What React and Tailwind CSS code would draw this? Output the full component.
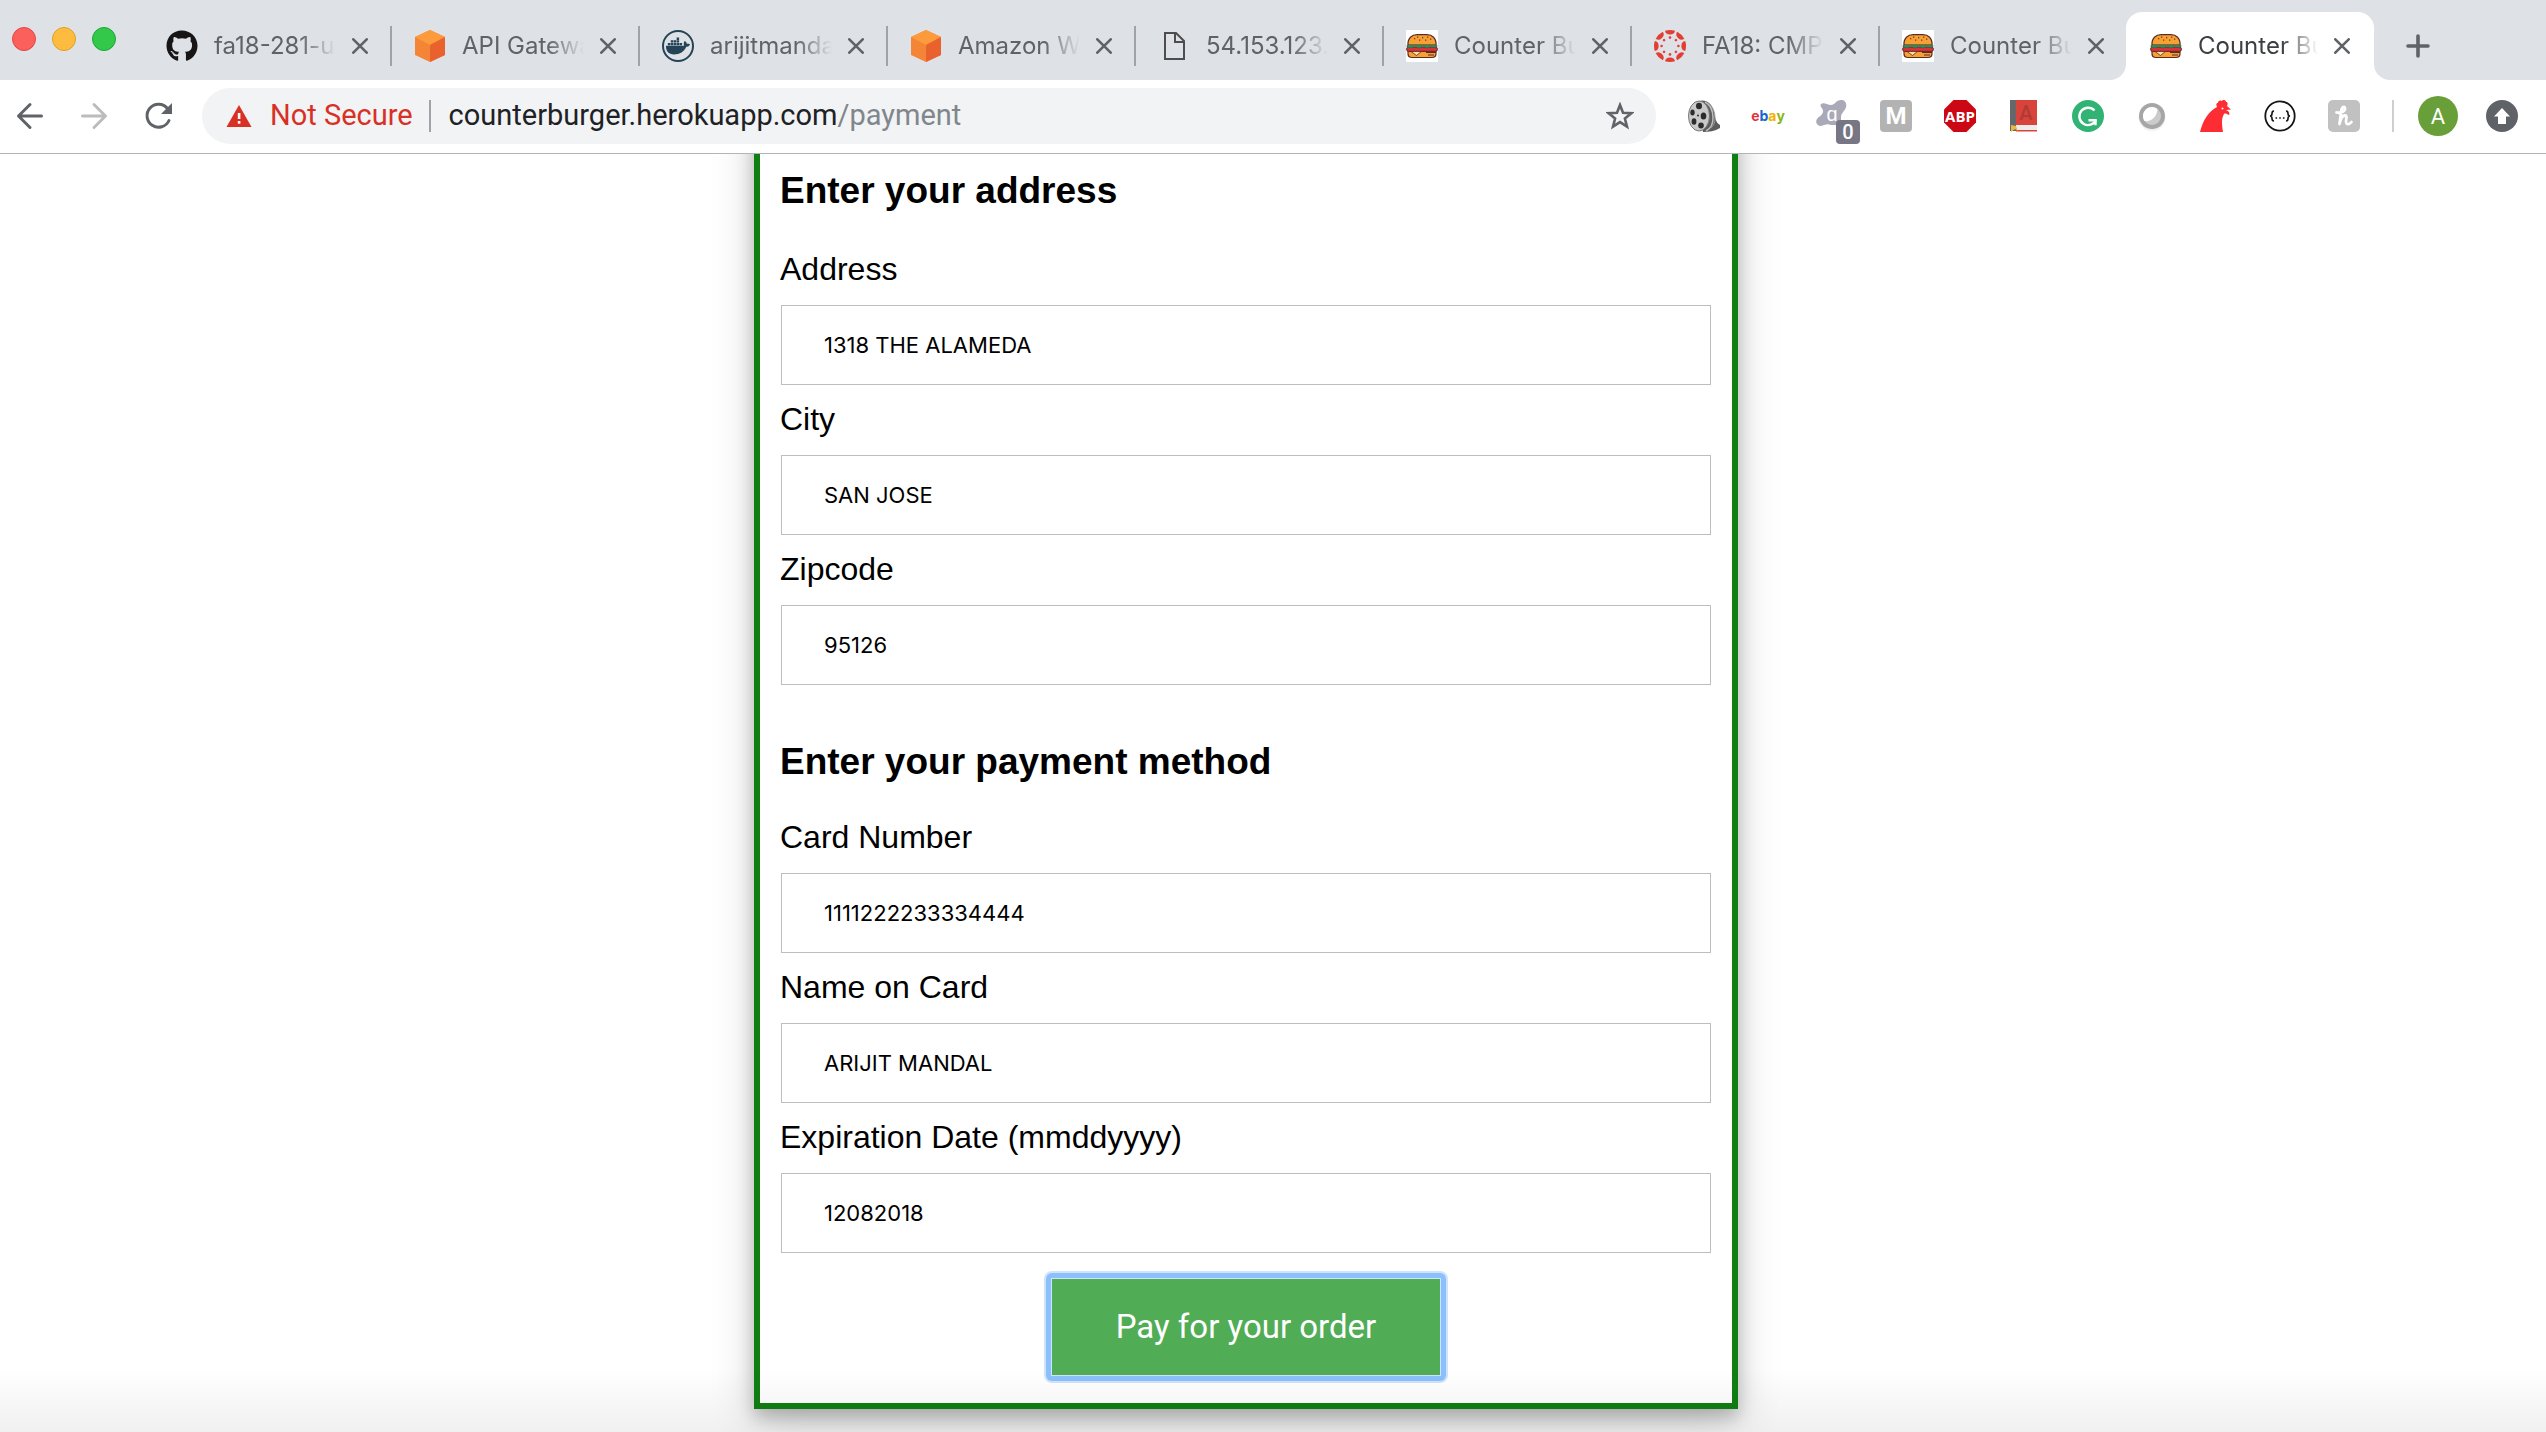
import React from "react";
import { FaGithub, FaDocker } from "react-icons/fa";

function GithubIcon() {
  return <FaGithub className="size-8 text-[#171516]" aria-hidden="true" />;
}

function CubeIcon() {
  return (
    <svg viewBox="0 0 32 32" className="size-8" aria-hidden="true">
      <path d="M16 0 31 7v18l-15 7L1 25V7Z" fill="#f58536" />
      <path d="M16 0 31 7 16 15 1 7Z" fill="#fd9a3c" />
      <path d="M16 15 31 7v18l-15 7Z" fill="#e9622d" />
    </svg>
  );
}

function DockerIcon() {
  return (
    <span className="flex size-8 items-center justify-center rounded-full border-2 border-[#254356]">
      <FaDocker className="size-6 text-[#254356]" aria-hidden="true" />
    </span>
  );
}

function FileIcon() {
  return (
    <svg viewBox="0 0 32 32" className="size-8" fill="none" stroke="#4d4d4d" strokeWidth="2" aria-hidden="true">
      <path d="M7 3h11l8 8v18H7Z" />
      <path d="M17 3v9h9" />
    </svg>
  );
}

function BurgerIcon() {
  return (
    <svg viewBox="0 0 32 32" className="size-8 bg-white" aria-hidden="true">
      <path d="M2 15C1.500 8 6 4.700 11 4.700h10c5 0 9.500 3.300 9 10.300Z" fill="#f7a034" stroke="#5c2b22" strokeWidth="1.200" />
      <path d="M2 21h28v2.500c0 2.500-1.500 4-4 4H6c-2.500 0-4-1.500-4-4Z" fill="#f7a034" stroke="#5c2b22" strokeWidth="1.200" />
      <rect x=".6" y="17" width="30.800" height="4.400" rx="2" fill="#d9303c" stroke="#5c2b22" strokeWidth="1" />
      <path d="M1 15.200h30v1.600l-3 .8-3-1-4 1.300-4-1.300-4 1.300-4-1.300-4 1.300-4-1Z" fill="#1f9b62" stroke="#3a5a3a" strokeWidth=".6" />
      <path d="m5 21.500 5.500 4 5-4Z" fill="#ffe29a" stroke="#5c2b22" strokeWidth=".8" />
      <path d="M20 22.500h10M22 25h6" stroke="#5c2b22" strokeWidth="1" />
      <g fill="#7b3f1c">
        <rect x="8" y="8" width="1.300" height="1.300" />
        <rect x="11" y="6.500" width="1.300" height="1.300" />
        <rect x="13" y="9.500" width="1.300" height="1.300" />
        <rect x="16" y="7" width="1.300" height="1.300" />
        <rect x="19" y="9.500" width="1.300" height="1.300" />
        <rect x="21" y="6.500" width="1.300" height="1.300" />
        <rect x="24" y="8.500" width="1.300" height="1.300" />
      </g>
    </svg>
  );
}

function CanvasIcon() {
  const turns = [0, 45, 90, 135, 180, 225, 270, 315];
  return (
    <svg viewBox="0 0 32 32" className="size-8" fill="#e33e34" aria-hidden="true">
      {turns.map((a) => (
        <g key={a} transform={`rotate(${a} 16 16)`}>
          <path d="M11 .8Q16-.8 21 .8Q20.500 4.600 16 4.600T11 .8Z" />
          <circle cx="16" cy="7.600" r="1.300" />
        </g>
      ))}
    </svg>
  );
}

const tabs = [
  { title: "fa18-281-user", Icon: GithubIcon },
  { title: "API Gateway", Icon: CubeIcon },
  { title: "arijitmandal", Icon: DockerIcon },
  { title: "Amazon Web", Icon: CubeIcon },
  { title: "54.153.123.0", Icon: FileIcon },
  { title: "Counter Burger", Icon: BurgerIcon },
  { title: "FA18: CMPE", Icon: CanvasIcon },
  { title: "Counter Burger", Icon: BurgerIcon },
  { title: "Counter Burger", Icon: BurgerIcon, active: true },
];

function Flare({ className, d }) {
  return (
    <svg viewBox="0 0 16 16" className={"absolute bottom-0 size-4 " + className} fill="#fff" aria-hidden="true">
      <path d={d} />
    </svg>
  );
}

function Tab({ title, Icon, active, first }) {
  return (
    <div
      role="tab"
      aria-selected={!!active}
      className={
        "relative flex h-full min-w-0 max-w-[248px] flex-1 items-center " +
        (active ? "rounded-t-2xl bg-white text-[#3c4043]" : "text-[#5f6368]")
      }
    >
      {active && (
        <>
          <Flare className="-left-4" d="M16 0v16H0A16 16 0 0 0 16 0Z" />
          <Flare className="-right-4" d="M0 0v16h16A16 16 0 0 1 0 0Z" />
        </>
      )}
      <span className={"mr-[22px] h-10 w-0.5 shrink-0 " + (first || active ? "" : "bg-[#9fa3a8]")} />
      <span className="shrink-0">
        <Icon />
      </span>
      <span className="ml-4 flex-1 overflow-hidden text-2xl whitespace-nowrap [mask-image:linear-gradient(to_right,#000_70%,transparent)]">
        {title}
      </span>
      <button type="button" aria-label={`Close ${title}`} className={"ml-4 shrink-0 text-[#5f6368] " + (active ? "mr-6" : "mr-[22px]")}>
        <svg viewBox="0 0 16 16" className="size-4" stroke="currentColor" strokeWidth="2.600" strokeLinecap="round">
          <path d="m1.300 1.300 13.400 13.400M14.700 1.300 1.300 14.700" />
        </svg>
      </button>
    </div>
  );
}

function TabStrip() {
  return (
    <div className="flex h-20 items-stretch bg-[#dee1e6] pt-3">
      <div className="flex w-[142px] shrink-0 gap-4 pt-[15px] pl-3">
        <button type="button" aria-label="Close window" className="size-6 rounded-full border border-[#e2463f] bg-[#fc605c]" />
        <button type="button" aria-label="Minimize window" className="size-6 rounded-full border border-[#dfa023] bg-[#fdbc40]" />
        <button type="button" aria-label="Zoom window" className="size-6 rounded-full border border-[#1ba932] bg-[#34c84a]" />
      </div>
      <div role="tablist" className="flex min-w-0 flex-1">
        {tabs.map((t, i) => (
          <Tab key={i} {...t} first={i === 0} />
        ))}
        <button type="button" aria-label="New tab" className="ml-8 shrink-0 text-[#5f6368]">
          <svg viewBox="0 0 24 24" className="size-6" stroke="currentColor" strokeWidth="3.600" strokeLinecap="round">
            <path d="M12 2v20M2 12h20" />
          </svg>
        </button>
      </div>
    </div>
  );
}

function Reel() {
  return (
    <svg viewBox="0 0 32 32" className="size-8" aria-hidden="true">
      <path d="M11 1C18-1 24 3 26 12c1 6 2 11 6 13v3c-5 3-11 4-17 4Z" fill="#5d5d5d" />
      <path d="M17 2c6 3 8 9 8 16s-3 11-7 13" fill="none" stroke="#bdbdbd" strokeWidth="1.500" />
      <path d="M20 3c5 4 7 9 7 15s-2 8-4 10" fill="none" stroke="#999" />
      <ellipse cx="11" cy="16" rx="10.500" ry="15" fill="#c9c9c9" stroke="#777" />
      <g fill="#2c2c2c">
        <ellipse cx="11" cy="6" rx="3" ry="3.200" />
        <ellipse cx="4.500" cy="12.500" rx="2.200" ry="3" />
        <ellipse cx="15.500" cy="16" rx="2.800" ry="3.500" />
        <ellipse cx="6" cy="21.500" rx="2.400" ry="3.200" />
        <ellipse cx="13" cy="25.500" rx="2.800" ry="3" />
        <circle cx="10" cy="15.500" r="1" />
      </g>
    </svg>
  );
}

function Ebay() {
  return (
    <span className="flex size-8 items-center justify-center text-sm font-bold leading-none">
      <span className="text-[#e53238]">e</span>
      <span className="text-[#1467d3]">b</span>
      <span className="text-[#f5af02]">a</span>
      <span className="text-[#86b817]">y</span>
    </span>
  );
}

function Avast() {
  return (
    <span className="relative block size-8">
      <svg viewBox="0 0 32 32" className="size-8" aria-hidden="true">
        <path
          d="M5 4c3-2 6 1 10 1 4 0 5-5 10-5 4 0 6 3 5 7s-5 6-5 10v8H15c-4-2-7 0-10 1-4 0-6-4-4-7s5-3 6-7-4-5-2-8Z"
          fill="#a9a9b8"
        />
        <text x="16" y="21" textAnchor="middle" fontFamily="Roboto, sans-serif" fontWeight="500" fontSize="20" fill="#fff">
          ɑ
        </text>
      </svg>
      <span className="absolute top-5 left-5 flex size-6 items-center justify-center rounded bg-[#777685] font-[Roboto,sans-serif] text-xl leading-none font-medium text-white">
        0
      </span>
    </span>
  );
}

function Mail() {
  return (
    <span className="flex size-8 items-center justify-center rounded-sm bg-[#b3b3b3] font-[Roboto,sans-serif] text-2xl leading-none font-bold text-white">
      M
    </span>
  );
}

function AdBlock() {
  return (
    <svg viewBox="0 0 32 32" className="size-8" aria-hidden="true">
      <path d="M9.500 0h13L32 9.500v13L22.500 32h-13L0 22.500v-13Z" fill="#cc0814" />
      <text x="16" y="21.500" textAnchor="middle" fontFamily="Open Sans, sans-serif" fontWeight="700" fontSize="15" fill="#fff">
        ABP
      </text>
    </svg>
  );
}

function Book() {
  return (
    <svg viewBox="0 0 32 32" className="size-8" aria-hidden="true">
      <path d="M2 0h27v25H2Z" fill="#d8443c" />
      <path d="M2 0h6v31H2Z" fill="#64686b" />
      <path d="M8 25h21v5H8Z" fill="#ececec" />
      <path d="M8 30h21v1.500H8Z" fill="#d8443c" />
      <path d="m3 25 5 1 2 5-3-2-4 3Z" fill="#efb73e" />
      <text x="18" y="20" textAnchor="middle" fontFamily="Roboto, sans-serif" fontWeight="500" fontSize="20" fill="#b13a34">
        A
      </text>
    </svg>
  );
}

function Grammar() {
  return (
    <svg viewBox="0 0 32 32" className="size-8" fill="none" aria-hidden="true">
      <circle cx="16" cy="16" r="16" fill="#31b374" />
      <path d="M22.500 10.500a8.700 8.700 0 1 0 1.500 9.500" stroke="#fff" strokeWidth="2.400" />
      <path d="M16.500 20.200h7v5" stroke="#fff" strokeWidth="2.400" />
    </svg>
  );
}

function Orb() {
  return (
    <svg viewBox="0 0 32 32" className="size-8" aria-hidden="true">
      <circle cx="16" cy="17.500" r="13.500" fill="#f0f0f0" />
      <circle cx="16" cy="16" r="13" fill="#a6a6a6" />
      <circle cx="16" cy="16" r="9" fill="#cbcbcb" />
      <path d="M16 7a9 9 0 0 0-7.500 14C15 22 21 17 21.500 9A9 9 0 0 0 16 7Z" fill="#fff" />
    </svg>
  );
}

function Rooster() {
  return (
    <svg viewBox="0 0 32 32" className="size-8" aria-hidden="true">
      <path
        d="M0 32C3 20 9 11 17 7c-1-2-1-4 1-4 0-3 3-3 4-2 1-2 4-1 4 1 2 0 2 2 1 4l4 3.500-5 .5c3 1 4 3 3 5-2-1-4-2-5-1-3 5-2 11-1 18Z"
        fill="#fe2c33"
      />
      <circle cx="22.500" cy="8.500" r="1" fill="#fff" />
    </svg>
  );
}

function Braces() {
  return (
    <svg viewBox="0 0 32 32" className="size-8" fill="none" stroke="#161616" aria-hidden="true">
      <circle cx="16" cy="16" r="14.700" strokeWidth="1.800" />
      <path d="M10 11c-2 0-2 1-2 2.500S7.500 16 6 16c1.500 0 2 1 2 2.500S8 21 10 21M22 11c2 0 2 1 2 2.500s.500 2.500 2 2.500c-1.500 0-2 1-2 2.500s0 2.500-2 2.500" strokeWidth="1.600" />
      <path d="M11.500 18h1.600M15.200 18h1.600M18.900 18h1.600" strokeWidth="1.600" />
    </svg>
  );
}

function Honey() {
  return (
    <svg viewBox="0 0 32 32" className="size-8" fill="none" aria-hidden="true">
      <rect width="32" height="32" rx="5" fill="#c1c1c1" />
      <path
        d="M8.500 12.500c4.500 1 9-1.500 8.500-4.500-.5-2-3-1-3.500 1.500L11.500 24c1-5 3-8.500 5.500-8.500 3.500 0-.5 6 1.500 8 1.200 1.200 3.500.5 5-1.500"
        stroke="#fff"
        strokeWidth="2.800"
        strokeLinecap="round"
        strokeLinejoin="round"
      />
    </svg>
  );
}

const extensions = [
  ["Video downloader", Reel],
  ["eBay", Ebay],
  ["Avast", Avast],
  ["Mail", Mail],
  ["Adblock Plus", AdBlock],
  ["Dictionary", Book],
  ["Grammar", Grammar],
  ["Orb", Orb],
  ["Rooster", Rooster],
  ["API tools", Braces],
  ["Honey", Honey],
];

function Toolbar() {
  return (
    <div className="flex h-[74px] items-center border-b border-[#b3b4b6] bg-white pr-7 pb-px pl-4">
      <div className="mr-[30px] flex shrink-0 gap-9 text-[#5f6368]">
        <button type="button" aria-label="Back">
          <svg viewBox="0 0 28 28" className="size-7" fill="none" stroke="currentColor" strokeWidth="3" strokeLinecap="round" strokeLinejoin="round">
            <path d="M25.500 14H2.500M14 2.500 2.500 14 14 25.500" />
          </svg>
        </button>
        <button type="button" aria-label="Forward" className="text-[#babcbe]">
          <svg viewBox="0 0 28 28" className="size-7" fill="none" stroke="currentColor" strokeWidth="3" strokeLinecap="round" strokeLinejoin="round">
            <path d="M2.500 14h23M14 2.500 25.500 14 14 25.500" />
          </svg>
        </button>
        <button type="button" aria-label="Reload">
          <svg viewBox="0 0 28 28" className="size-7" fill="none" stroke="currentColor" strokeWidth="3">
            <path d="M23.500 6.500A11.500 11.500 0 1 0 25 18.500" strokeLinecap="round" />
            <path d="M28 1v11H17Z" fill="currentColor" stroke="none" />
          </svg>
        </button>
      </div>
      <div className="flex h-14 min-w-0 flex-1 items-center rounded-full bg-[#f1f3f4] pr-[22px] pl-6 text-[29px]">
        <svg viewBox="0 0 26 24" className="h-6 w-[26px] shrink-0" aria-hidden="true">
          <path d="m13 1 12.500 22H.5Z" fill="#d93025" />
          <path d="M11.800 9h2.600v6h-2.600ZM11.800 17h2.600v2.800h-2.600Z" fill="#fff" />
        </svg>
        <span className="ml-[18px] shrink-0 font-[Roboto,sans-serif] text-[#d93025]">Not Secure</span>
        <span className="mr-[18px] ml-4 h-8 w-0.5 shrink-0 bg-[#9fa3a8]" />
        <span className="min-w-0 flex-1 truncate font-[Roboto,sans-serif] text-[#202124]">
          counterburger.herokuapp.com<span className="text-[#80868b]">/payment</span>
        </span>
        <button type="button" aria-label="Bookmark this page" className="shrink-0 text-[#5f6368]">
          <svg viewBox="0 0 28 28" className="size-7" fill="none" stroke="currentColor" strokeWidth="2.600">
            <path d="m14 3 3 7.700 8.300.500-6.400 5.300 2.100 8.100-7-4.500-7 4.500 2.100-8.100-6.400-5.300 8.300-.500Z" />
          </svg>
        </button>
      </div>
      <div className="ml-8 flex shrink-0 items-center gap-8">
        {extensions.map(([name, Icon]) => (
          <button key={name} type="button" aria-label={name}>
            <Icon />
          </button>
        ))}
      </div>
      <span className="mx-6 ml-8 h-8 w-0.5 shrink-0 bg-[#cdcfd2]" />
      <button type="button" aria-label="Profile" className="flex size-10 shrink-0 items-center justify-center rounded-full bg-[#689f38] font-[Roboto,sans-serif] text-[22px] text-white">
        A
      </button>
      <button type="button" aria-label="Update available" className="ml-7 shrink-0">
        <svg viewBox="0 0 32 32" className="size-8">
          <circle cx="16" cy="16" r="16" fill="#5f6368" />
          <path d="m16 8 8 8.500h-4V24h-8v-7.500H8Z" fill="#fff" />
        </svg>
      </button>
    </div>
  );
}

function Field({ id, label, value }) {
  return (
    <div className="mb-4">
      <label htmlFor={id} className="mb-[18px] block text-[32px] leading-9">
        {label}
      </label>
      <div className="px-px">
        <input
          id={id}
          type="text"
          defaultValue={value}
          className="block h-20 w-full border border-[#bebebe] bg-white px-[42px] font-[Inter,sans-serif] text-[22px] outline-none"
        />
      </div>
    </div>
  );
}

export default function App() {
  return (
    <div className="flex min-h-screen flex-col bg-white font-[Inter,sans-serif]">
      <header>
        <TabStrip />
        <Toolbar />
      </header>
      <main className="relative flex flex-1 justify-center overflow-hidden pr-[54px] pb-6">
        <form
          onSubmit={(e) => e.preventDefault()}
          className="-mt-10 w-full max-w-[984px] border-6 border-t-0 border-[#0f7f12] bg-white px-5 pt-14 pb-[22px] font-['Liberation_Sans',sans-serif] text-black shadow-[0_8px_16px_0_rgba(0,0,0,0.2),0_12px_40px_0_rgba(0,0,0,0.19)]"
        >
          <h2 className="mb-[39px] text-[37px] leading-[42px] font-bold">Enter your address</h2>
          <Field id="address" label="Address" value="1318 THE ALAMEDA" />
          <Field id="city" label="City" value="SAN JOSE" />
          <Field id="zip" label="Zipcode" value="95126" />
          <h2 className="mt-14 mb-9 text-[37px] leading-[42px] font-bold">Enter your payment method</h2>
          <Field id="card" label="Card Number" value="1111222233334444" />
          <Field id="name" label="Name on Card" value="ARIJIT MANDAL" />
          <Field id="expiry" label="Expiration Date (mmddyyyy)" value="12082018" />
          <div className="flex justify-center pt-1">
            <div className="rounded-md bg-[#8bc0fc] p-[5px] shadow-[0_0_0_2px_#cfe4fa]">
              <button
                type="submit"
                className="block h-[98px] border border-[#cfe4fa] bg-[#51ac56] px-16 font-[Roboto,sans-serif] text-[33px] text-white outline-none"
              >
                Pay for your order
              </button>
            </div>
          </div>
        </form>
        <div className="pointer-events-none absolute inset-x-0 bottom-0 h-16 bg-linear-to-b from-transparent to-black/6" />
      </main>
    </div>
  );
}
